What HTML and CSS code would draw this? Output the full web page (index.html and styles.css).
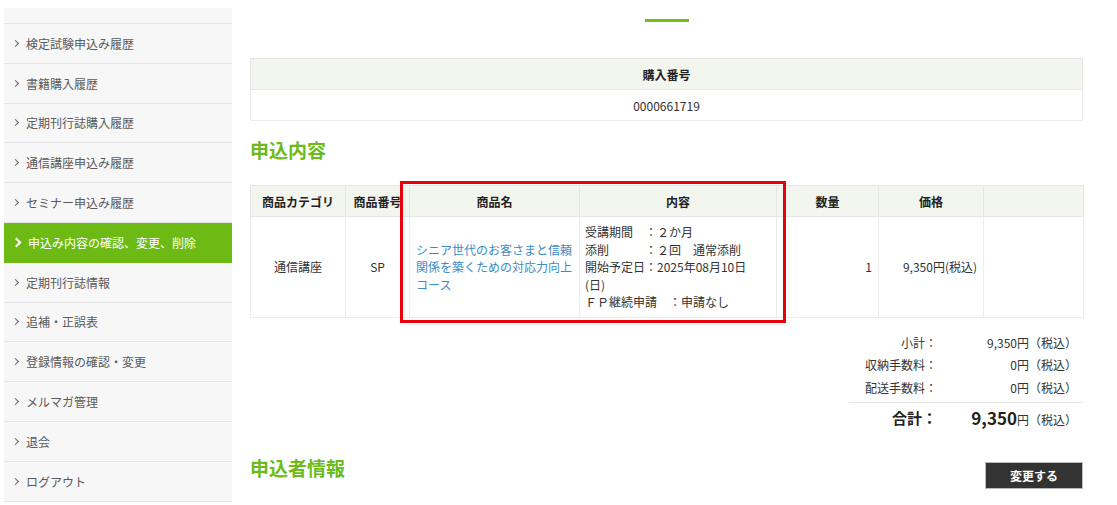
FILE: index.html
```html
<!DOCTYPE html>
<html lang="ja">
<head>
<meta charset="utf-8">
<link rel="stylesheet" href="styles.css">
</head>
<body>
<div class="page">
  <nav class="side">
    <div class="side-top"></div>
    <a class="nav-item">検定試験申込み履歴</a>
    <a class="nav-item">書籍購入履歴</a>
    <a class="nav-item">定期刊行誌購入履歴</a>
    <a class="nav-item">通信講座申込み履歴</a>
    <a class="nav-item">セミナー申込み履歴</a>
    <a class="nav-item active">申込み内容の確認、変更、削除</a>
    <a class="nav-item">定期刊行誌情報</a>
    <a class="nav-item">追補・正誤表</a>
    <a class="nav-item">登録情報の確認・変更</a>
    <a class="nav-item">メルマガ管理</a>
    <a class="nav-item">退会</a>
    <a class="nav-item">ログアウト</a>
  </nav>
  <main class="main">
    <div class="title-bar"></div>
    <table class="tbl order-no">
      <tr><th>購入番号</th></tr>
      <tr><td class="center">0000661719</td></tr>
    </table>
    <h2 class="sec-title">申込内容</h2>
    <div class="items-wrap">
      <table class="tbl items">
        <colgroup>
          <col class="c1"><col class="c2"><col class="c3"><col class="c4"><col class="c5"><col class="c6"><col class="c7">
        </colgroup>
        <tr>
          <th>商品カテゴリ</th><th>商品番号</th><th>商品名</th><th>内容</th><th>数量</th><th>価格</th><th></th>
        </tr>
        <tr>
          <td class="center">通信講座</td>
          <td class="center">SP</td>
          <td class="name"><a>シニア世代のお客さまと信頼関係を築くための対応力向上コース</a></td>
          <td class="detail">受講期間　：２か月<br>添削　　　：２回　通常添削<br>開始予定日：2025年08月10日<br>(日)<br>ＦＰ継続申請　：申請なし</td>
          <td class="right">1</td>
          <td class="right">9,350円(税込)</td>
          <td></td>
        </tr>
      </table>
      <div class="highlight"></div>
    </div>
    <div class="summary">
      <div class="sum-row"><span class="lbl">小計：</span><span class="val">9,350円（税込）</span></div>
      <div class="sum-row"><span class="lbl">収納手数料：</span><span class="val">0円（税込）</span></div>
      <div class="sum-row"><span class="lbl">配送手数料：</span><span class="val">0円（税込）</span></div>
      <div class="sum-row total"><span class="lbl">合計：</span><span class="val"><b>9,350</b>円（税込）</span></div>
    </div>
    <div class="applicant">
      <h2 class="sec-title">申込者情報</h2>
      <button class="btn">変更する</button>
    </div>
  </main>
</div>
</body>
</html>
```

FILE: styles.css
```css
* { box-sizing: border-box; }
html, body { margin: 0; padding: 0; background: #fff; }
body {
  font-family: "Noto Sans CJK JP", "Noto Sans", sans-serif;
  font-size: 12px;
  color: #333;
  overflow: hidden;
}
.page {
  display: flex;
  align-items: flex-start;
  padding: 8px 0 0 4px;
  gap: 18px;
}
.side {
  width: 228px;
  flex: none;
  background: #f7f7f7;
  display: flex;
  flex-direction: column;
}
.side-top {
  height: 16px;
  border-bottom: 1px solid #e4e4e4;
}
.nav-item {
  display: flex;
  align-items: center;
  height: 39.8px;
  padding-left: 9px;
  color: #5a5a5a;
  font-size: 12px;
  border-bottom: 1px solid #e4e4e4;
  text-decoration: none;
}
.nav-item::before {
  content: "";
  width: 4px;
  height: 4px;
  border-top: 1px solid #666;
  border-right: 1px solid #666;
  transform: rotate(45deg);
  margin-right: 8px;
  margin-left: 0;
}
.nav-item.active {
  background: #6dba14;
  color: #fff;
  border-bottom-color: #6dba14;
}
.nav-item.active::before {
  border-color: #fff;
  border-width: 2px;
  width: 5px;
  height: 5px;
}
.main {
  width: 833px;
  flex: none;
  display: flex;
  flex-direction: column;
}
.title-bar {
  width: 44px;
  height: 3px;
  background: #72bf1a;
  align-self: center;
  margin-top: 11px;
  margin-bottom: 36px;
}
.tbl {
  width: 100%;
  border-collapse: collapse;
  border: 1px solid #e6e6e6;
}
.tbl th {
  background: #f3f5ef;
  font-weight: bold;
  color: #222;
  height: 31px;
  border: 1px solid #e6e6e6;
  font-size: 12px;
  padding: 0 4px;
}
.tbl td {
  border: 1px solid #ececec;
  height: 31px;
  padding: 0 6px;
  color: #333;
}
.center { text-align: center; }
.right { text-align: right; }
.sec-title {
  font-size: 19px;
  font-weight: bold;
  color: #6cbb1a;
  margin: 17px 0 0;
  line-height: 24px;
}
.items-wrap {
  position: relative;
  margin-top: 23px;
}
.items { table-layout: fixed; }
.items .c1 { width: 95px; }
.items .c2 { width: 64px; }
.items .c3 { width: 170px; }
.items .c4 { width: 197px; }
.items .c5 { width: 102px; }
.items .c6 { width: 105px; }
.items .c7 { width: 100px; }
.items th { white-space: nowrap; overflow: hidden; }
.items td {
  height: 101px;
  line-height: 17.5px;
}
.items td.name a { color: #3a8cc6; }
.items td.detail { padding: 4px 5px; }
.highlight {
  position: absolute;
  left: 150px;
  top: -4px;
  width: 386px;
  height: 142px;
  border: 3px solid #e8000b;
  pointer-events: none;
}
.summary {
  align-self: flex-end;
  width: 234px;
  margin-top: 13px;
  display: flex;
  flex-direction: column;
}
.sum-row {
  display: grid;
  grid-template-columns: 88px 1fr;
  height: 22.5px;
  align-items: center;
}
.sum-row .lbl { text-align: right; color: #333; }
.sum-row .val { text-align: right; padding-right: 6px; color: #333; }
.sum-row.total {
  border-top: 1px solid #e6e6e6;
  margin-top: 3px;
  height: 30px;
}
.sum-row.total .lbl { font-size: 15px; font-weight: bold; color: #222; }
.sum-row.total .val b { font-size: 17px; color: #222; }
.applicant {
  display: flex;
  justify-content: space-between;
  align-items: flex-start;
  margin-top: 24px;
}
.applicant .sec-title { margin: 0; }
.btn {
  width: 98px;
  height: 27px;
  margin-top: 6px;
  background: #333;
  color: #fff;
  font-family: inherit;
  font-size: 12px;
  font-weight: bold;
  border: 1px solid #bbb;
  padding: 0;
}
```
